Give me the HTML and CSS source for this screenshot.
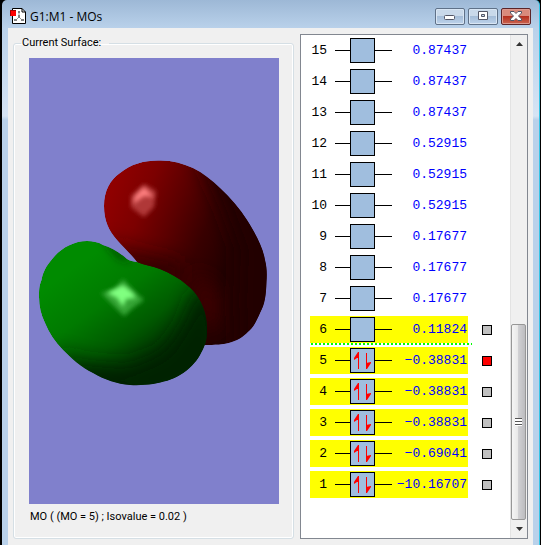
FILE: index.html
```html
<!DOCTYPE html>
<html lang="en">
<head>
    <meta charset="UTF-8">
    <meta name="viewport" content="width=device-width, initial-scale=1.0">
    <title>G1:M1 - MOs</title>
    <link rel="stylesheet" href="styles.css">
</head>
<body>
    <div class="window">
        <header class="titlebar">
            <svg class="app-icon" width="16" height="16" viewBox="0 0 16 16">
                <path d="M2.5 .5H12L15.5 4V15.5H2.5Z" fill="#fff" stroke="#000"/>
                <path d="M12 .5V4H15.5" fill="none" stroke="#000"/>
                <path d="M9 4V9L5.500 12.500M9 9L12.500 12.500" fill="none" stroke="#999"/>
                <path d="M8 3h2v2h-2zM8 7h2v3h-2zM4 11h3v2h-3zM11 11h3v2h-3z" fill="#808080"/>
                <rect x="0" y="2" width="6" height="6" fill="#f00"/>
                <path d="M.5 8V2.500H6" fill="none" stroke="#900"/>
            </svg>
            <h1 class="title">G1:M1 - MOs</h1>
            <div class="controls">
                <button type="button" class="control" aria-label="Minimize">
                    <svg width="12" height="10" viewBox="0 0 12 10"><rect x=".5" y="4.500" width="10" height="4" rx="1" fill="#fff" stroke="#535666"/></svg>
                </button>
                <button type="button" class="control" aria-label="Maximize">
                    <svg width="12" height="10" viewBox="0 0 12 10"><path d="M1.500 .5H10.500V8.500H1.500ZM4.500 3.500V5.500H7.500V3.500Z" fill="#fff" fill-rule="evenodd" stroke="#535666"/></svg>
                </button>
                <button type="button" class="control close" aria-label="Close">
                    <svg width="12" height="10" viewBox="0 0 12 10"><path d="M.5 .5H4L6 2.500 8 .5H11.500V2L8.500 5 11.500 8V9.500H8L6 7.500 4 9.500H.5V8L3.500 5 .5 2Z" fill="#fff" stroke="#535666"/></svg>
                </button>
            </div>
        </header>

        <main class="content">
            <fieldset class="surface">
                <legend>Current Surface:</legend>
                <svg class="canvas" viewBox="29 58 250 446" role="img" aria-label="Orbital surface">
                    <defs>
                        <clipPath id="red-lobe">
                            <path id="red-shape" d="M137 262C132 255 124 248 117 240C109 231 104 221 104 206C104 191 110 180 120 173C131 164 144 160.500 158 160.500C171 160 182 163 193 168C203 173 212 180 220 188C231 198 240 209 247 220C257 236 263 248 265 260C267 268 267 274 266.500 282C266 295 265 304 260 313C257 320 254 326 250 330C245 335 239 340 232 342C224 345 214 345 205 345L170 320Z"/>
                        </clipPath>
                        <clipPath id="green-lobe">
                            <path id="green-shape" d="M87 241C74 241 61 248 53 258C46 266 43 272 41.500 280C39 286 39 290 39 297C39 306 41 315 45 323C49 333 55 342 63 350C72 359 81 367 93 373C105 380 117 384 130 385C138 385.500 146 385 153 384C163 382 172 380 180 375C189 370 196 362 200 355C204 348 207 341 207 333C207 326 207 320 205 313C202 302 196 292 187 285C179 278 170 273 160 269C152 266 144 265 137 262C133 261 130 261 127 259C119 252 112 248 103 245C98 242 93 241 87 241Z"/>
                        </clipPath>
                        <linearGradient id="red-shade" gradientUnits="userSpaceOnUse" x1="112" y1="190" x2="237" y2="240">
                            <stop offset="0" stop-color="#8f0000"/>
                            <stop offset=".25" stop-color="#7c0000"/>
                            <stop offset=".5" stop-color="#5b0000"/>
                            <stop offset=".75" stop-color="#380000"/>
                            <stop offset="1" stop-color="#230000"/>
                        </linearGradient>
                        <linearGradient id="green-shade" gradientUnits="userSpaceOnUse" x1="82" y1="262" x2="158" y2="370">
                            <stop offset="0" stop-color="#008b00"/>
                            <stop offset=".35" stop-color="#007a00"/>
                            <stop offset=".65" stop-color="#005a00"/>
                            <stop offset=".9" stop-color="#003000"/>
                            <stop offset="1" stop-color="#002300"/>
                        </linearGradient>
                        <filter id="soft" x="-50%" y="-50%" width="200%" height="200%"><feGaussianBlur stdDeviation="10"/></filter>
                        <filter id="edge" x="-50%" y="-50%" width="200%" height="200%"><feGaussianBlur stdDeviation="4"/></filter>
                        <filter id="glint" x="-50%" y="-50%" width="200%" height="200%"><feGaussianBlur stdDeviation="2"/></filter>
                    </defs>
                    <g clip-path="url(#red-lobe)">
                        <use href="#red-shape" fill="url(#red-shade)"/>
                        <path d="M196 150L240 176 270 216 288 262 280 350 238 356 236 300 238 250 222 206Z" fill="#210000" filter="url(#soft)"/>
                        <path d="M104 242L142 256 180 264 180 285 132 270Z" fill="#250000" filter="url(#soft)"/>
                        <path d="M194 272L216 290 218 325 202 330Z" fill="#420000" filter="url(#soft)"/>
                        <path d="M144 184L156 191 154 207 144 217 131 207 131 196Z" fill="#b03838" filter="url(#glint)"/>
                        <path d="M144 187L154 197 144 196 133 204 135 196Z" fill="#ff8080" filter="url(#glint)"/>
                    </g>
                    <g clip-path="url(#green-lobe)">
                        <use href="#green-shape" fill="url(#green-shade)"/>
                        <path d="M214 285L194 294 184 322 164 352 128 367 80 362 56 350 80 390 160 400 220 370Z" fill="#002200" filter="url(#soft)"/>
                        <path d="M100 238L112 246 132 262 120 258Z" fill="#002800" filter="url(#edge)"/>
                        <path d="M123 279L132 289 144 300 134 307 124 316 114 306 101 293 115 289Z" fill="#34a434" filter="url(#glint)"/>
                        <path d="M123 285L132 292 136 298 126 299 123 307 117 298 107 293Z" fill="#80ff80" filter="url(#glint)"/>
                    </g>
                </svg>
                <p class="caption">MO ( (MO = 5) ; Isovalue = 0.02 )</p>
            </fieldset>

            <section class="levels" aria-label="Molecular orbitals">
                <svg width="0" height="0" class="symbols">
                    <symbol id="spins" viewBox="0 0 23 23">
                        <path d="M7.500 20V4M15.500 4V20" fill="none" stroke="#f00"/>
                        <path d="M8 3V9H6L3 11V9L5 6L7 3ZM15 20V14L20 13V14L18 17L16 20Z" fill="#f00"/>
                    </symbol>
                </svg>
                <ol class="orbitals" reversed>
                    <li><div class="level"><span class="number">15</span><span class="wire"><span class="box"></span></span><span class="energy">0.87437</span></div></li>
                    <li><div class="level"><span class="number">14</span><span class="wire"><span class="box"></span></span><span class="energy">0.87437</span></div></li>
                    <li><div class="level"><span class="number">13</span><span class="wire"><span class="box"></span></span><span class="energy">0.87437</span></div></li>
                    <li><div class="level"><span class="number">12</span><span class="wire"><span class="box"></span></span><span class="energy">0.52915</span></div></li>
                    <li><div class="level"><span class="number">11</span><span class="wire"><span class="box"></span></span><span class="energy">0.52915</span></div></li>
                    <li><div class="level"><span class="number">10</span><span class="wire"><span class="box"></span></span><span class="energy">0.52915</span></div></li>
                    <li><div class="level"><span class="number">9</span><span class="wire"><span class="box"></span></span><span class="energy">0.17677</span></div></li>
                    <li><div class="level"><span class="number">8</span><span class="wire"><span class="box"></span></span><span class="energy">0.17677</span></div></li>
                    <li><div class="level"><span class="number">7</span><span class="wire"><span class="box"></span></span><span class="energy">0.17677</span></div></li>
                    <li class="lumo"><label class="level selected" for="mo6"><span class="number">6</span><span class="wire"><span class="box"></span></span><span class="energy">0.11824</span></label><input type="checkbox" id="mo6"></li>
                    <li><label class="level selected" for="mo5"><span class="number">5</span><span class="wire"><span class="box"><svg><use href="#spins"/></svg></span></span><span class="energy">−0.38831</span></label><input type="checkbox" id="mo5" checked></li>
                    <li><label class="level selected" for="mo4"><span class="number">4</span><span class="wire"><span class="box"><svg><use href="#spins"/></svg></span></span><span class="energy">−0.38831</span></label><input type="checkbox" id="mo4"></li>
                    <li><label class="level selected" for="mo3"><span class="number">3</span><span class="wire"><span class="box"><svg><use href="#spins"/></svg></span></span><span class="energy">−0.38831</span></label><input type="checkbox" id="mo3"></li>
                    <li><label class="level selected" for="mo2"><span class="number">2</span><span class="wire"><span class="box"><svg><use href="#spins"/></svg></span></span><span class="energy">−0.69041</span></label><input type="checkbox" id="mo2"></li>
                    <li><label class="level selected" for="mo1"><span class="number">1</span><span class="wire"><span class="box"><svg><use href="#spins"/></svg></span></span><span class="energy">−10.16707</span></label><input type="checkbox" id="mo1"></li>
                </ol>
                <div class="scrollbar">
                    <button type="button" class="arrow" aria-label="Scroll up"><svg width="7" height="4" viewBox="0 0 7 4"><path d="M0 4L3.500 0 7 4Z" fill="#333"/></svg></button>
                    <div class="track"><div class="thumb"><span class="grip"></span></div></div>
                    <button type="button" class="arrow" aria-label="Scroll down"><svg width="7" height="4" viewBox="0 0 7 4"><path d="M0 0L3.500 4 7 0Z" fill="#333"/></svg></button>
                </div>
            </section>
        </main>
    </div>
</body>
</html>
```
FILE: styles.css
```css
* {
    box-sizing: border-box;
}
body {
    margin: 0;
    background-color: #000;
    font-family: Roboto, sans-serif;
    font-size: 11px;
    color: #000;
}
.window {
    display: flex;
    flex-direction: column;
    min-height: 100vh;
    margin: 0 1px 0 2px;
    padding: 0 6px;
    border-right: 1px solid #35c5e6;
    border-top-left-radius: 5px;
    border-top-right-radius: 5px;
    background: linear-gradient(#9db8d6 0, #b9d1ea 28px, #d6e4f4 116px, #b9d1ea 120px);
}

/* title bar */
.titlebar {
    display: flex;
    align-items: center;
    height: 28px;
    padding: 4px 2px 0 2px;
}
.title {
    flex: 1;
    margin: 0 0 0 4px;
    font-family: "Segoe UI", "Open Sans", sans-serif;
    font-size: 12px;
    font-weight: normal;
}
.controls {
    display: flex;
    gap: 3px;
}
.control {
    display: flex;
    align-items: center;
    justify-content: center;
    width: 30px;
    height: 17px;
    padding: 0;
    border: 1px solid #5f7188;
    border-radius: 2px;
    background: linear-gradient(#c9d9ea 45%, #a5bdd8 50%, #bdd3eb);
    box-shadow: inset 0 0 0 1px #d9e6f4;
}
.close {
    border-color: #5b2428;
    background: linear-gradient(#d98a7c 45%, #b5301f 50%, #cb6552);
    box-shadow: inset 0 0 0 1px #dc9a90;
}

.content {
    flex: 1;
    display: grid;
    grid-template-columns: 1fr 228px;
    align-items: start;
    gap: 6px;
    padding: 6px 5px;
    background-color: #f0f0f0;
}

/* surface view */
.surface {
    min-width: 0;
    height: 505px;
    margin: 0;
    padding: 6px 14px 0 15px;
    border: 1px solid #d5dfe5;
    border-radius: 3px;
    box-shadow: inset 0 0 0 1px #fff;
}
.surface legend {
    margin-left: -8px;
    padding: 0 8px 0 1px;
    line-height: 18px;
}
.canvas {
    display: block;
    width: 100%;
    background-color: #8080cc;
}
.caption {
    margin: 4px 1px;
    line-height: 18px;
}

/* orbital list */
.levels {
    display: flex;
    height: 505px;
    border: 1px solid #828790;
    background-color: #fff;
}
.symbols {
    position: absolute;
}
.orbitals {
    flex: 1;
    display: flex;
    flex-direction: column;
    gap: 4px;
    margin: 0;
    padding: 2px 0 0 9px;
    list-style: none;
    font-family: "Courier New", "Liberation Mono", monospace;
    font-size: 13px;
}
.orbitals li {
    position: relative;
    display: flex;
    align-items: center;
    gap: 14px;
}
.level {
    display: grid;
    grid-template-columns: 17px 65px 1fr;
    align-items: center;
    width: 158px;
    height: 27px;
    padding-right: 1px;
}
.selected {
    background-color: #ff0;
}
.number {
    text-align: right;
}
.wire {
    display: flex;
    margin-left: 8px;
    padding-left: 15px;
    background: linear-gradient(#000, #000) center / 100% 1px no-repeat;
}
.box {
    width: 25px;
    height: 25px;
    border: 1px solid #000;
    background-color: #a0bede;
}
.box svg {
    display: block;
    width: 23px;
    height: 23px;
}
.energy {
    justify-self: end;
    color: #00f;
    white-space: nowrap;
}
.lumo::after {
    content: "";
    position: absolute;
    left: 1px;
    bottom: -2px;
    width: 161px;
    height: 2px;
    background: repeating-linear-gradient(90deg, #0f0 0 2px, transparent 2px 4px);
}
.orbitals input {
    appearance: none;
    width: 10px;
    height: 10px;
    margin: 0;
    border: 1px solid #000;
    background-color: #c0c0c0;
}
.orbitals input:checked {
    background-color: #f00;
}

/* scroll bar */
.scrollbar {
    display: flex;
    flex-direction: column;
    width: 17px;
    border-left: 1px solid #e3e3e3;
    background-color: #f0f0f0;
}
.arrow {
    display: flex;
    align-items: center;
    justify-content: center;
    height: 18px;
    padding: 0;
    border: 0;
    background: none;
}
.track {
    flex: 1;
    display: flex;
    align-items: flex-end;
}
.thumb {
    display: flex;
    align-items: center;
    justify-content: center;
    width: 15px;
    height: 42%;
    border: 1px solid #979797;
    border-radius: 2px;
    background: linear-gradient(90deg, #f5f5f5, #e8e8e8 45%, #d0d0d3 50%, #bcbcbf);
}
.grip {
    width: 7px;
    height: 8px;
    background: repeating-linear-gradient(#555 0 1px, #fff 1px 3px);
}
```
